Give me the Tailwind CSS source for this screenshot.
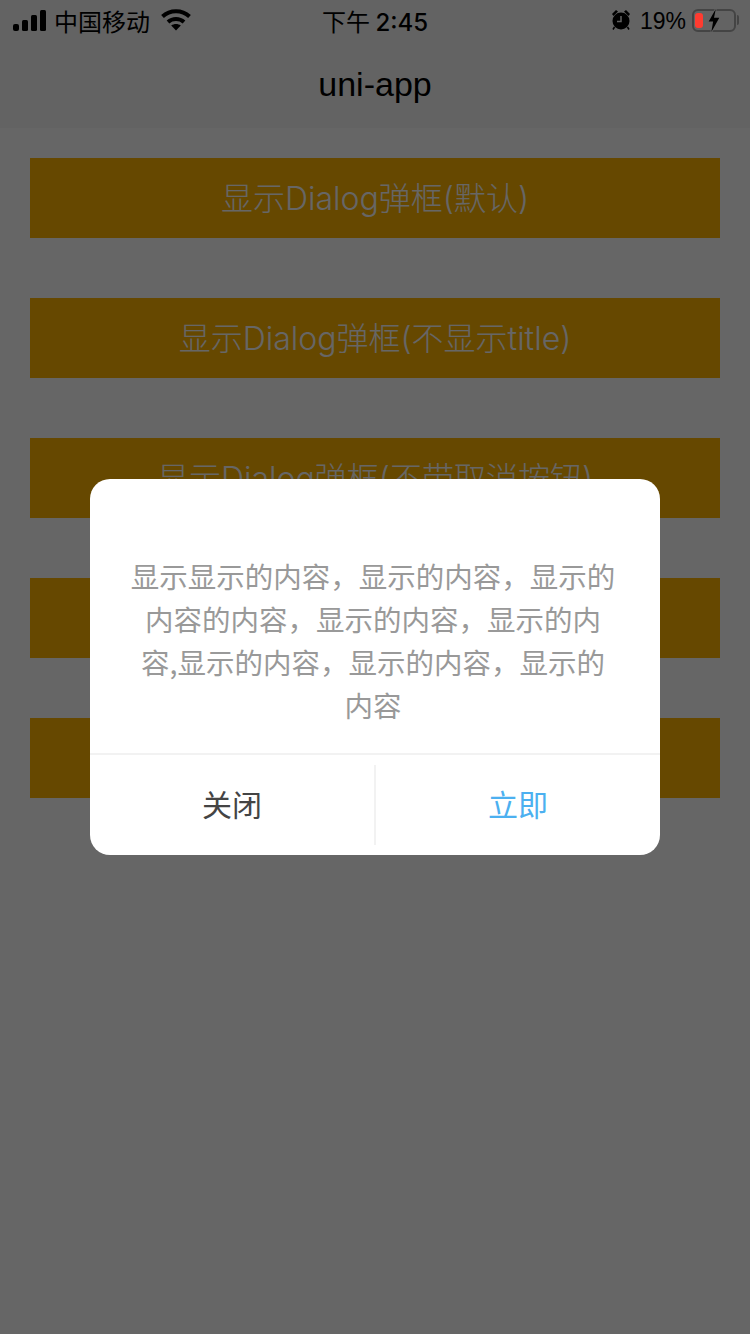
<!DOCTYPE html>
<html lang="zh"><head><meta charset="utf-8"><script src="https://cdn.jsdelivr.net/npm/@tailwindcss/browser@4"></script></head>
<body class="m-0 bg-white">
<div class="relative w-[750px] h-[1334px] overflow-hidden bg-white font-['Inter','Noto_Sans_CJK_SC',sans-serif]">
  <div class="bg-[#f8f8f8]">
    <div class="h-[40px]"></div>
    <div class="h-[88px] flex items-center justify-center text-[34px] text-black font-['Liberation_Sans',sans-serif]">uni-app</div>
  </div>
  <div class="flex flex-col gap-[60px] px-[30px] pt-[30px]">
    <div class="h-[80px] flex items-center justify-center pt-[2px] bg-[#ffb300] text-white text-[32px] font-light">显示Dialog弹框(默认)</div>
    <div class="h-[80px] flex items-center justify-center pt-[2px] bg-[#ffb300] text-white text-[32px] font-light">显示Dialog弹框(不显示title)</div>
    <div class="h-[80px] flex items-center justify-center pt-[2px] bg-[#ffb300] text-white text-[32px] font-light">显示Dialog弹框(不带取消按钮)</div>
    <div class="h-[80px] bg-[#ffb300]"></div>
    <div class="h-[80px] bg-[#ffb300]"></div>
  </div>
  <div class="absolute inset-0 bg-black/60"></div>
  <div class="absolute left-0 top-0 w-full h-[40px] flex items-center justify-between text-black">
    <div class="flex items-center pl-[13px] gap-[7px]">
      <svg width="34" height="21" viewBox="0 0 34 21" fill="#000"><rect x="0" y="14" width="6" height="7" rx="2"/><rect x="9" y="10" width="6" height="11" rx="1.5"/><rect x="18" y="5" width="6" height="16" rx="1.500"/><rect x="27" y="0" width="6" height="21" rx="1.500"/></svg>
      <span class="pt-[2px] text-[24px] leading-[38px] font-['Noto_Sans_CJK_SC',sans-serif] font-normal">中国移动</span>
      <svg class="ml-[4px]" width="30" height="22" viewBox="0 0 30 22" fill="none" stroke="#000" stroke-width="4"><path d="M1.500 7.500C9 0.500 21 0.500 28.500 7.500"/><path d="M7 13c4.500-4 11.500-4 16 0"/><path d="M15 21.500l-4.800-5c2.800-2 6.800-2 9.600 0z" fill="#000" stroke="none"/></svg>
    </div>
    <span class="absolute left-[322px] top-[1px] text-[24px] leading-[40px] font-['Noto_Sans_CJK_SC',sans-serif] font-normal">下午 <span class="font-['Inter',sans-serif] font-medium">2:45</span></span>
    <div class="flex items-center pr-[11px]">
      <svg width="20" height="22" viewBox="0 0 20 22" fill="#000"><circle cx="10" cy="12" r="8.500"/><path d="M1 5l4-4 2 1.500-4.500 4.500zM19 5l-4-4-2 1.500 4.500 4.500z"/><path d="M10 7v5.500H6" stroke="#636363" stroke-width="1.500" fill="none"/><path d="M3.500 18l-1.500 2.500M16.500 18l1.500 2.500" stroke="#000" stroke-width="1.500"/></svg>
      <span class="ml-[9px] pt-[2px] text-[23px] leading-[38px] font-['Liberation_Sans',sans-serif]">19%</span>
      <div class="relative ml-[6px] w-[44px] h-[23px] rounded-[6px] border-2 border-[#444]">
        <div class="absolute left-[1px] top-[2px] w-[8px] h-[15px] rounded-[3px] bg-[#ff3b30]"></div>
        <svg class="absolute left-[13px] top-[-2px]" width="14" height="23" viewBox="0 0 14 26"><path d="M9 0L1 14h5l-2 12 9-16H7z" fill="#000" stroke="#636363" stroke-width="2" paint-order="stroke"/></svg>
      </div>
      <div class="ml-[1px] w-[2px] h-[10px] rounded-r-[2px] bg-[#444]"></div>
    </div>
  </div>
  <div class="absolute left-[90px] top-[479px] w-[570px] h-[376px] bg-white rounded-[20px] overflow-hidden flex flex-col font-['Noto_Sans_CJK_SC',sans-serif]">
    <div class="h-[274px] pt-[75px] pl-[38px] pr-[42px] text-center text-[28.5px] leading-[43px] text-[#999] font-normal">显示显示的内容，显示的内容，显示的内容的内容，显示的内容，显示的内容,显示的内容，显示的内容，显示的内容</div>
    <div class="h-[2px] bg-[#f2f2f2]"></div>
    <div class="flex-1 flex relative">
      <div class="flex-1 flex items-center justify-center pb-[4px] text-[30px] text-[#444] font-normal">关闭</div>
      <div class="w-[2px] my-[10px] bg-[#f2f2f2]"></div>
      <div class="flex-1 flex items-center justify-center pb-[4px] text-[30px] text-[#4cb0f0] font-normal">立即</div>
    </div>
  </div>
</div>
</body></html>
